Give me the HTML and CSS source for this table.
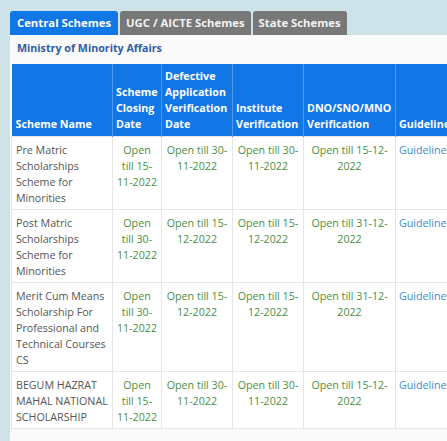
FILE: index.html
```html
<!DOCTYPE html>
<html lang="en">
<head>
  <meta charset="UTF-8" />
  <title>Schemes</title>
  <link rel="stylesheet" href="styles.css">
</head>
<body>

<div class="page">
  <div class="tabs">
    <span class="tab active">Central Schemes</span>
    <span class="tab">UGC / AICTE Schemes</span>
    <span class="tab">State Schemes</span>
  </div>

  <div class="panel">
    <div class="ministry">Ministry of Minority Affairs</div>

    <table class="schemes">
      <colgroup>
        <col style="width:101px">
        <col style="width:49px">
        <col style="width:71px">
        <col style="width:71px">
        <col style="width:92px">
        <col style="width:80px">
      </colgroup>
      <thead>
        <tr>
          <th>Scheme Name</th>
          <th>Scheme Closing Date</th>
          <th>Defective Application Verification Date</th>
          <th>Institute Verification</th>
          <th>DNO/SNO/MNO Verification</th>
          <th>Guidelines</th>
        </tr>
      </thead>
      <tbody>
        <tr>
          <td class="name">Pre Matric Scholarships Scheme for Minorities</td>
          <td class="date">Open till 15-11-2022</td>
          <td class="date">Open till 30-11-2022</td>
          <td class="date">Open till 30-11-2022</td>
          <td class="date">Open till 15-12-2022</td>
          <td><a href="#">Guidelines</a></td>
        </tr>
        <tr>
          <td class="name">Post Matric Scholarships Scheme for Minorities</td>
          <td class="date">Open till 30-11-2022</td>
          <td class="date">Open till 15-12-2022</td>
          <td class="date">Open till 15-12-2022</td>
          <td class="date">Open till 31-12-2022</td>
          <td><a href="#">Guidelines</a></td>
        </tr>
        <tr>
          <td class="name">Merit Cum Means Scholarship For Professional and Technical Courses CS</td>
          <td class="date">Open till 30-11-2022</td>
          <td class="date">Open till 15-12-2022</td>
          <td class="date">Open till 15-12-2022</td>
          <td class="date">Open till 31-12-2022</td>
          <td><a href="#">Guidelines</a></td>
        </tr>
        <tr>
          <td class="name">BEGUM HAZRAT MAHAL NATIONAL SCHOLARSHIP</td>
          <td class="date">Open till 15-11-2022</td>
          <td class="date">Open till 30-11-2022</td>
          <td class="date">Open till 30-11-2022</td>
          <td class="date">Open till 15-12-2022</td>
          <td><a href="#">Guidelines</a></td>
        </tr>
      </tbody>
    </table>
  </div>
</div>

</body>
</html>
```

FILE: styles.css
```css
body {
  font-family: "Open Sans", Arial, sans-serif;
  font-size: 10.7px;
  line-height: 16px;
  background: #cde2e9;
  margin: 0;
  overflow: hidden;
}
.page {
  padding: 11px 0 0 10px;
  width: 600px;
}
.tabs {
  display: flex;
  gap: 2px;
}
.tab {
  background: #787878;
  color: #f2f2f2;
  font-weight: bold;
  font-size: 11.3px;
  padding: 4px 6px 4px;
  border-radius: 3px 3px 0 0;
}
.tab.active {
  background: #1176e6;
  color: #fff;
  padding: 4px 7px 4px;
}
.panel {
  background: #fafafa;
  padding: 5px 0 40px 1px;
}
.ministry {
  color: #2f5ca6;
  font-weight: bold;
  padding: 0 0 8px 6px;
}
.schemes {
  border-collapse: collapse;
  table-layout: fixed;
  width: 464px;
  background: #fff;
}
.schemes th {
  background: #1176e6;
  color: #fff;
  text-align: left;
  vertical-align: bottom;
  padding: 4px 3px 4px 3px;
  border-left: 1px solid #4d9af0;
}
.schemes th:first-child {
  border-left: none;
  padding-left: 4px;
}
.schemes td {
  vertical-align: top;
  text-align: center;
  padding: 5px 3px 3px;
  border: 1px solid #e6e6e6;
  color: #4b8f3e;
}
.schemes td.name {
  text-align: left;
  color: #555;
  padding-left: 4px;
}
.schemes td a {
  color: #3b8dd2;
  text-decoration: none;
  display: block;
  text-align: left;
  white-space: nowrap;
}
```
